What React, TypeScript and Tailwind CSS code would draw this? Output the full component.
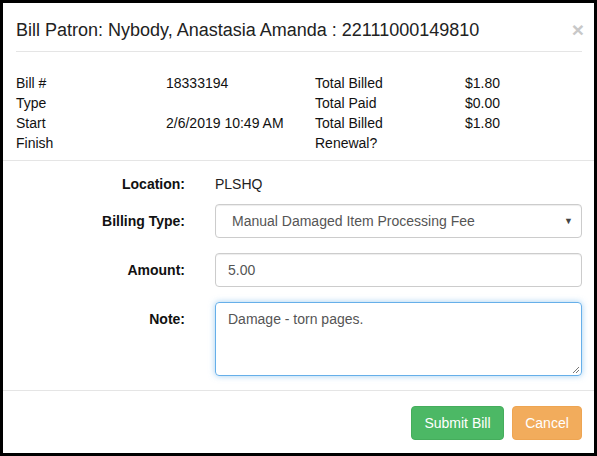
const info = [
  ["Bill #", "18333194", "Total Billed", "$1.80"],
  ["Type", "", "Total Paid", "$0.00"],
  ["Start", "2/6/2019 10:49 AM", "Total Billed", "$1.80"],
  ["Finish", "", "Renewal?", ""],
];

const App = () => {
  return (
    <div className="w-[597px] h-[456px] border-[3px] border-black bg-white text-[14px] leading-[20px] text-[#333] font-['Liberation_Sans',Arial,sans-serif] flex flex-col">
      {/* header */}
      <div className="pl-[13px] pr-[12px] pt-[14px]">
        <div className="flex items-start justify-between pb-[8px] border-b border-[#e5e5e5]">
          <h4 className="text-[18px] leading-[26px] text-[#222]">
            Bill Patron: Nybody, Anastasia Amanda : 22111000149810
          </h4>
          <span className="text-[21px] leading-[21px] font-bold text-[#c8c8c8] mt-[2px] mr-[-2px]">×</span>
        </div>
        <div className="pt-[21px] pb-[7px] text-[#111]">
          {info.map((row, i) => (
            <div key={i} className="flex">
              <div className="w-[150px] shrink-0 h-[20px]">{row[0]}</div>
              <div className="w-[149px] shrink-0 h-[20px]">{row[1]}</div>
              <div className="w-[150px] shrink-0 h-[20px]">{row[2]}</div>
              <div className="flex-1 h-[20px]">{row[3]}</div>
            </div>
          ))}
        </div>
      </div>

      {/* form */}
      <div className="border-t border-[#e5e5e5] pl-[13px] pr-[12px] pt-[13px] flex flex-col">
        <div className="flex">
          <div className="w-[169px] text-right font-bold text-[#111]">Location:</div>
          <div className="ml-[30px] text-[#222]">PLSHQ</div>
        </div>
        <div className="flex mt-[10px]">
          <div className="w-[169px] text-right font-bold text-[#111] pt-[7px]">Billing Type:</div>
          <div className="ml-[30px] flex-1 h-[34px] border border-[#ccc] rounded-[4px] flex items-center justify-between pl-[16px] pr-[8px] text-[#555] shadow-[inset_0_1px_1px_rgba(0,0,0,0.075)]">
            <span>Manual Damaged Item Processing Fee</span>
            <span className="text-[9px] text-[#444]">▼</span>
          </div>
        </div>
        <div className="flex mt-[15px]">
          <div className="w-[169px] text-right font-bold text-[#111] pt-[7px]">Amount:</div>
          <div className="ml-[30px] flex-1 h-[34px] border border-[#ccc] rounded-[4px] flex items-center px-[12px] text-[#555] shadow-[inset_0_1px_1px_rgba(0,0,0,0.075)]">
            5.00
          </div>
        </div>
        <div className="flex mt-[15px]">
          <div className="w-[169px] text-right font-bold text-[#111] pt-[7px]">Note:</div>
          <div className="ml-[30px] flex-1 h-[74px] border border-[#66afe9] rounded-[4px] px-[12px] pt-[6px] text-[#555] shadow-[0_0_6px_rgba(102,175,233,0.6)] relative">
            Damage - torn pages.
            <svg className="absolute right-[1px] bottom-[1px]" width="9" height="9" viewBox="0 0 9 9">
              <path d="M8 2 L2 8 M8 5 L5 8" stroke="#777" strokeWidth="1" />
            </svg>
          </div>
        </div>
      </div>

      {/* footer */}
      <div className="mt-[14px] border-t border-[#e5e5e5] pl-[13px] pr-[12px] pt-[15px] flex justify-end gap-[8px]">
        <button className="h-[34px] w-[93px] rounded-[4px] bg-[#4cb865] border border-[#45ad5c] text-white text-[14px]">
          Submit Bill
        </button>
        <button className="h-[34px] w-[70px] rounded-[4px] bg-[#f2ac5c] border border-[#eea552] text-white text-[14px]">
          Cancel
        </button>
      </div>
    </div>
  );
};

export default App;
